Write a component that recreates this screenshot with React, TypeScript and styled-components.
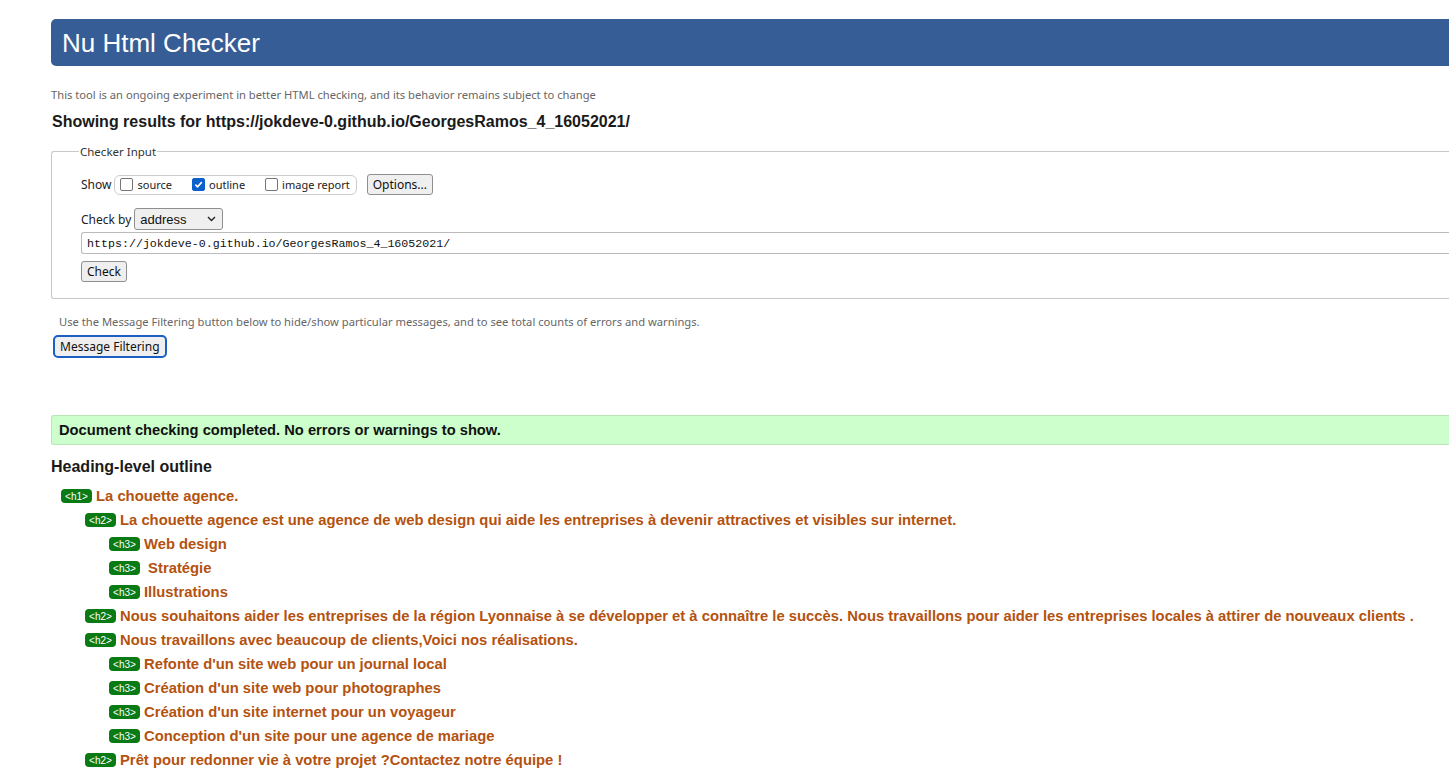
import React from "react";
import styled, { createGlobalStyle } from "styled-components";

const Global = createGlobalStyle`
  html, body { margin: 0; padding: 0; background: #fff; overflow: hidden; }
  body { font-family: "Liberation Sans", Arial, sans-serif; color: #222; }
`;

const Page = styled.div`
  width: 1520px;
  padding: 19px 0 0 51px;
  box-sizing: border-box;
`;

const Header = styled.h1`
  margin: 0;
  height: 47px;
  background: #365d96;
  color: #fff;
  border-radius: 5px 0 0 5px;
  font: 400 26px/48px "Liberation Sans", Arial, sans-serif;
  padding-left: 11px;
`;

const Intro = styled.div`
  display: flex;
  flex-direction: column;
  gap: 9px;
  margin: 21px 0 12px;
`;

const Note = styled.p<{ $indent?: number }>`
  margin: 0;
  font: 400 11.2px/16px "Noto Sans", "Open Sans", sans-serif;
  color: #666;
  padding-left: ${(p) => p.$indent ?? 0}px;
`;

const Title = styled.h2`
  margin: 0;
  font: 700 16px/20px "Liberation Sans", Arial, sans-serif;
  color: #1a1a1a;
  padding-left: 1px;
`;

const Fieldset = styled.fieldset`
  margin: 0;
  border: 1px solid #c8c8c8;
  border-right: none;
  border-radius: 3px 0 0 3px;
  padding: 15px 0 16px 29px;
  display: flex;
  flex-direction: column;
`;

const Legend = styled.legend`
  font: 400 11.5px "Noto Sans", "Open Sans", sans-serif;
  color: #333;
  padding: 0 1px;
  margin-left: -2px;
`;

const Row = styled.div<{ $mt?: number }>`
  display: flex;
  align-items: center;
  margin-top: ${(p) => p.$mt ?? 0}px;
  font: 400 12px "Noto Sans", "Open Sans", sans-serif;
  color: #222;
`;

const Group = styled.div`
  display: flex;
  align-items: center;
  height: 18px;
  border: 1px solid #ccc;
  border-radius: 6px;
  padding: 0 6px 0 5px;
  margin-left: 3px;
`;

const CheckItem = styled.label<{ $gap?: number }>`
  display: flex;
  align-items: center;
  margin-right: ${(p) => p.$gap ?? 0}px;
  font: 400 11px "Noto Sans", "Open Sans", sans-serif;
  color: #222;
`;

const Box = styled.span<{ $on?: boolean }>`
  width: 11px;
  height: 11px;
  border: 1px solid ${(p) => (p.$on ? "#0a61c9" : "#767676")};
  background: ${(p) => (p.$on ? "#0a61c9" : "#fff")};
  border-radius: 2px;
  margin-right: 4px;
  display: flex;
  align-items: center;
  justify-content: center;
`;

const Btn = styled.button<{ $ml?: number }>`
  margin-left: ${(p) => p.$ml ?? 0}px;
  height: 21px;
  padding: 0 5px;
  font: 400 12px "Noto Sans", "Open Sans", sans-serif;
  color: #111;
  background: #efefef;
  border: 1px solid #8f8f8f;
  border-radius: 3px;
`;

const Select = styled.div`
  margin-left: 3px;
  width: 89px;
  height: 22px;
  box-sizing: border-box;
  border: 1px solid #8f8f8f;
  border-radius: 3px;
  background: #efefef;
  display: flex;
  align-items: center;
  justify-content: space-between;
  padding: 0 6px 0 5px;
  font: 400 13px "Liberation Sans", Arial, sans-serif;
  color: #111;
`;

const UrlInput = styled.div`
  margin-top: 2px;
  height: 22px;
  box-sizing: border-box;
  border: 1px solid #bbb;
  border-right: none;
  border-radius: 3px 0 0 3px;
  padding-left: 5px;
  display: flex;
  align-items: center;
  font: 400 11.65px "Liberation Mono", "DejaVu Sans Mono", monospace;
  color: #111;
`;

const Filter = styled.div`
  display: flex;
  flex-direction: column;
  align-items: flex-start;
  gap: 5px;
  margin-top: 15px;
`;

const FilterBtn = styled.button`
  margin-left: 2px;
  height: 23px;
  padding: 0 5px;
  font: 400 12px "Noto Sans", "Open Sans", sans-serif;
  color: #111;
  background: #efefef;
  border: 2px solid #1a5fc4;
  border-radius: 5px;
  outline: none;
`;

const Success = styled.div`
  margin-top: 57px;
  height: 30px;
  box-sizing: border-box;
  background: #ccffcc;
  border: 1px solid #b8e6b8;
  border-right: none;
  border-radius: 3px 0 0 3px;
  padding-left: 7px;
  display: flex;
  align-items: center;
  font: 700 14.7px "Liberation Sans", Arial, sans-serif;
  color: #111;
`;

const OutlineTitle = styled.h2`
  margin: 12px 0 0;
  font: 700 16px/20px "Liberation Sans", Arial, sans-serif;
  color: #1a1a1a;
`;

const OutlineList = styled.ul`
  list-style: none;
  margin: 7px 0 0;
  padding: 0;
  display: flex;
  flex-direction: column;
`;

const Item = styled.li<{ $level: number }>`
  height: 24px;
  display: flex;
  align-items: center;
  padding-left: ${(p) => 10 + (p.$level - 1) * 24}px;
  font: 700 14.8px "Liberation Sans", Arial, sans-serif;
  color: #b4520f;
  white-space: pre;
`;

const Tag = styled.span`
  display: inline-flex;
  align-items: center;
  justify-content: center;
  background: #0a7a14;
  color: #fff;
  border-radius: 4px;
  height: 14px;
  width: 31px;
  font: 400 10px "Liberation Sans", Arial, sans-serif;
  margin-right: 4px;
`;

const outline: [number, string][] = [
  [1, "La chouette agence."],
  [2, "La chouette agence est une agence de web design qui aide les entreprises à devenir attractives et visibles sur internet."],
  [3, "Web design"],
  [3, " Stratégie"],
  [3, "Illustrations"],
  [2, "Nous souhaitons aider les entreprises de la région Lyonnaise à se développer et à connaître le succès. Nous travaillons pour aider les entreprises locales à attirer de nouveaux clients ."],
  [2, "Nous travaillons avec beaucoup de clients,Voici nos réalisations."],
  [3, "Refonte d'un site web pour un journal local"],
  [3, "Création d'un site web pour photographes"],
  [3, "Création d'un site internet pour un voyageur"],
  [3, "Conception d'un site pour une agence de mariage"],
  [2, "Prêt pour redonner vie à votre projet ?Contactez notre équipe !"],
];

const Check = () => (
  <svg width="9" height="9" viewBox="0 0 10 10">
    <path d="M1.5 5.2 L4 7.6 L8.6 2.4" fill="none" stroke="#fff" strokeWidth="1.8" />
  </svg>
);

const Chevron = () => (
  <svg width="9" height="6" viewBox="0 0 9 6">
    <path d="M1 1 L4.5 4.5 L8 1" fill="none" stroke="#222" strokeWidth="1.4" />
  </svg>
);

export default function App() {
  return (
    <>
      <Global />
      <Page>
        <Header>Nu Html Checker</Header>
        <Intro>
          <Note>This tool is an ongoing experiment in better HTML checking, and its behavior remains subject to change</Note>
          <Title>Showing results for https://jokdeve-0.github.io/GeorgesRamos_4_16052021/</Title>
        </Intro>
        <Fieldset>
          <Legend>Checker Input</Legend>
          <Row>
            Show
            <Group>
              <CheckItem $gap={20}>
                <Box />source
              </CheckItem>
              <CheckItem $gap={20}>
                <Box $on>
                  <Check />
                </Box>
                outline
              </CheckItem>
              <CheckItem>
                <Box />image report
              </CheckItem>
            </Group>
            <Btn $ml={10}>Options...</Btn>
          </Row>
          <Row $mt={13}>
            Check by
            <Select>
              address
              <Chevron />
            </Select>
          </Row>
          <UrlInput>https://jokdeve-0.github.io/GeorgesRamos_4_16052021/</UrlInput>
          <Row $mt={7}>
            <Btn>Check</Btn>
          </Row>
        </Fieldset>
        <Filter>
          <Note $indent={8}>Use the Message Filtering button below to hide/show particular messages, and to see total counts of errors and warnings.</Note>
          <FilterBtn>Message Filtering</FilterBtn>
        </Filter>
        <Success>Document checking completed. No errors or warnings to show.</Success>
        <OutlineTitle>Heading-level outline</OutlineTitle>
        <OutlineList>
          {outline.map(([lvl, text], i) => (
            <Item key={i} $level={lvl}>
              <Tag>{`<h${lvl}>`}</Tag>
              {text}
            </Item>
          ))}
        </OutlineList>
      </Page>
    </>
  );
}
